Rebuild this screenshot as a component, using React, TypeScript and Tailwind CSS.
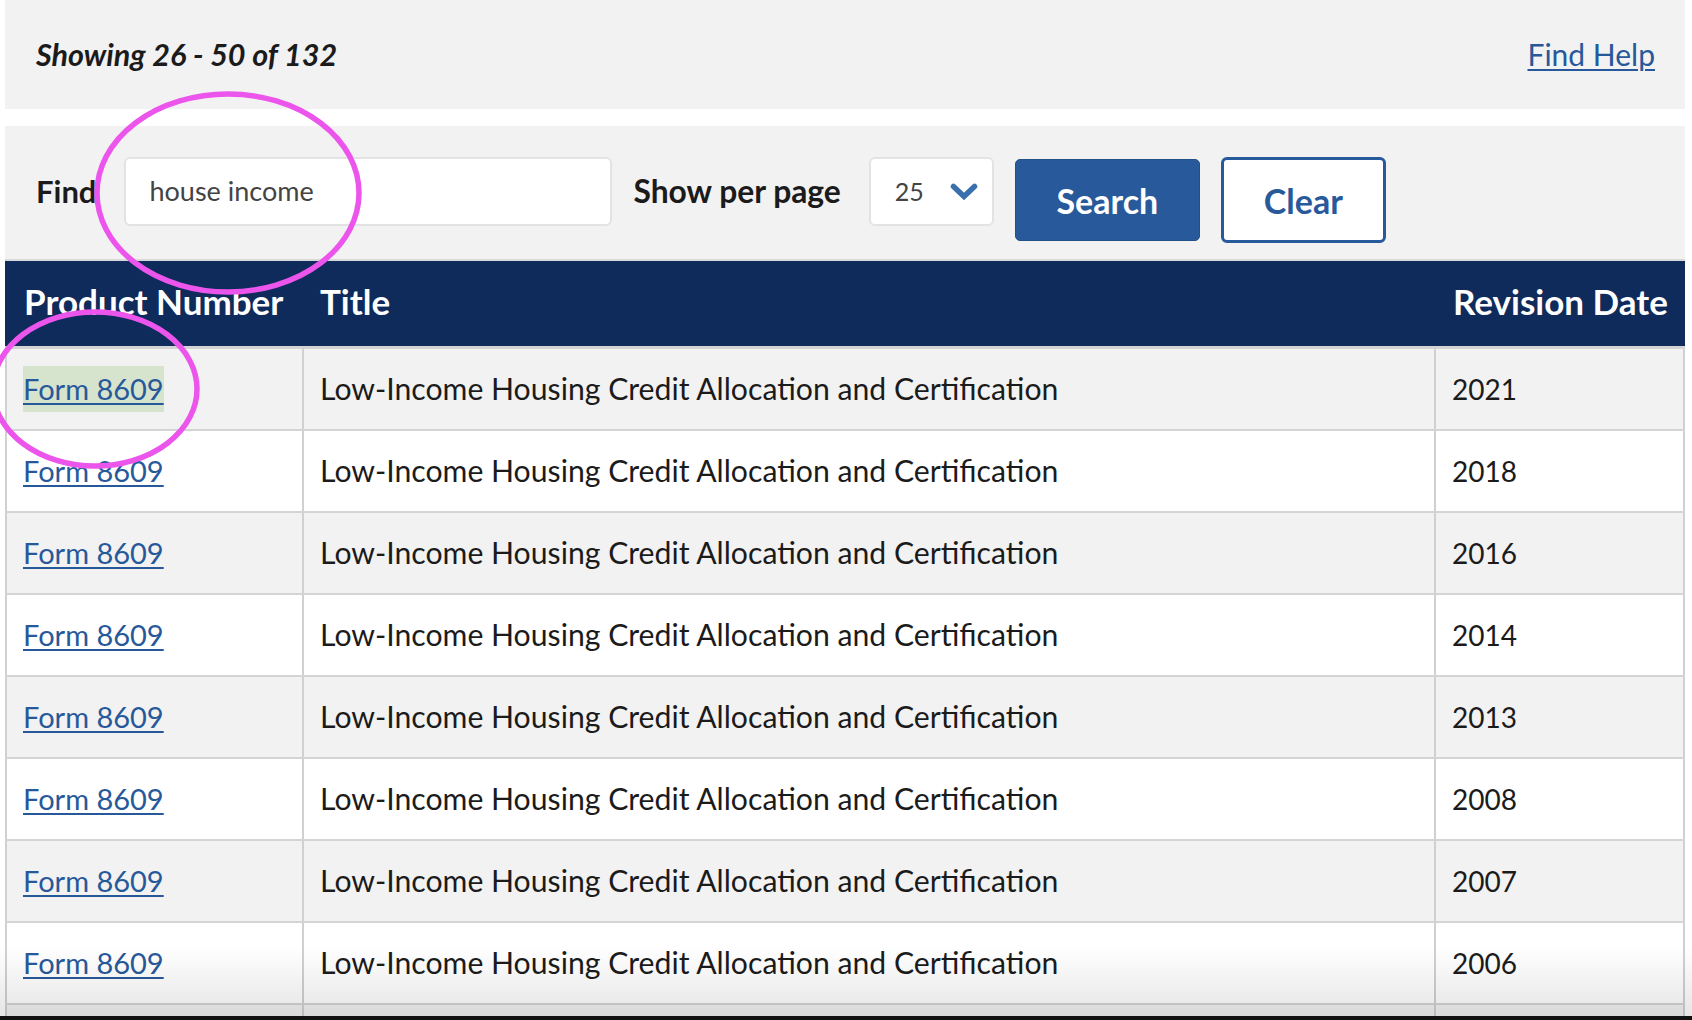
import React from "react";

const years = ["2021", "2018", "2016", "2014", "2013", "2008", "2007", "2006", ""];
const title = "Low-Income Housing Credit Allocation and Certification";

const App: React.FC = () => {
  return (
    <div className="relative h-[1020px] w-full overflow-hidden bg-white font-['Lato',sans-serif] text-[#1b1b1b]">
      {/* result count */}
      <div className="ml-[5px] flex h-[109px] w-[1680px] items-center justify-between bg-[#f2f2f2] pl-[31px] pr-[30px]">
        <div className="text-[30.5px] font-bold italic">Showing 26 - 50 of 132</div>
        <a href="#" className="text-[30px] text-[#27599a] underline decoration-2 underline-offset-[3px]">
          Find Help
        </a>
      </div>

      {/* search form */}
      <div className="ml-[5px] mt-[17px] flex h-[133px] w-[1680px] items-start bg-[#f2f2f2] pl-[31px] pt-[31px]">
        <div className="flex h-[69px] items-center text-[31px] font-bold">Find</div>
        <div className="ml-[28px] flex h-[69px] w-[488px] items-center rounded-[6px] border-2 border-[#e3e3e3] bg-white pl-[23px] text-[27px] text-[#444]">
          house income
        </div>
        <div className="ml-[21px] flex h-[69px] items-center text-[31.8px] font-bold">Show per page</div>
        <div className="ml-[28px] flex h-[69px] w-[125px] items-center rounded-[6px] border-2 border-[#e3e3e3] bg-white pl-[24px] text-[25px] text-[#444]">
          <span>25</span>
          <svg className="ml-[26px]" width="28" height="18" viewBox="0 0 28 18">
            <path d="M3.5 3.5 L14 13.5 L24.5 3.5" fill="none" stroke="#3a6fae" strokeWidth="5.5" strokeLinecap="round" strokeLinejoin="miter" />
          </svg>
        </div>
        <button className="ml-[21px] mt-[2px] flex h-[82px] w-[185px] items-center justify-center rounded-[5px] border border-[#214f88] bg-[#28599a] text-[34px] font-bold text-white">
          Search
        </button>
        <button className="ml-[21px] flex h-[86px] w-[165px] items-center justify-center rounded-[6px] border-[3px] border-[#28599a] bg-white text-[34px] font-bold text-[#28599a]">
          Clear
        </button>
      </div>

      {/* results table */}
      <div className="ml-[5px] w-[1680px]">
        <div className="flex h-[87px] items-center border-t-2 border-[#d9d9d9] bg-[#0f2b5b] pb-[5px] text-[35px] font-bold text-white">
          <div className="w-[299px] pl-[19px]">Product Number</div>
          <div className="w-[1132px] pl-[16px]">Title</div>
          <div className="flex-1 pl-[17px]">Revision Date</div>
        </div>
        <div className="border-t-[3px] border-[#d4d4d4]">
          {years.map((year, i) => (
            <div
              key={i}
              className={`flex h-[82px] items-stretch border-b-2 border-[#d4d4d4] ${i % 2 === 0 ? "bg-[#f2f2f2]" : "bg-white"}`}
            >
              <div className="flex w-[299px] items-center border-x-2 border-[#d0d0d0] pl-[16px] text-[29px]">
                {year && (
                  <a
                    href="#"
                    className={`text-[#27599a] underline decoration-2 underline-offset-[3px] ${i === 0 ? "inline-block h-[46px] bg-[#d6e4cd] leading-[46px]" : ""}`}
                  >
                    Form 8609
                  </a>
                )}
              </div>
              <div className="flex w-[1132px] items-center border-r-2 border-[#d0d0d0] pl-[16px] text-[30.2px]">{year && title}</div>
              <div className="flex flex-1 items-center border-r-2 border-[#d0d0d0] pl-[16px] text-[28px]">{year}</div>
            </div>
          ))}
        </div>
      </div>

      {/* screenshot fade and edge */}
      <div className="pointer-events-none absolute bottom-[4px] left-0 h-[70px] w-full bg-gradient-to-b from-transparent to-black/10" />
      <div className="absolute bottom-0 left-0 h-[4px] w-full bg-[#111]" />

      {/* annotation circles */}
      <svg className="pointer-events-none absolute left-0 top-0" width="1692" height="1020" viewBox="0 0 1692 1020">
        <ellipse cx="228" cy="193" rx="131" ry="99" fill="none" stroke="#ec55ec" strokeWidth="5.5" />
        <ellipse cx="95" cy="389" rx="102" ry="77" fill="none" stroke="#ec55ec" strokeWidth="5.5" />
      </svg>
    </div>
  );
};

export default App;
